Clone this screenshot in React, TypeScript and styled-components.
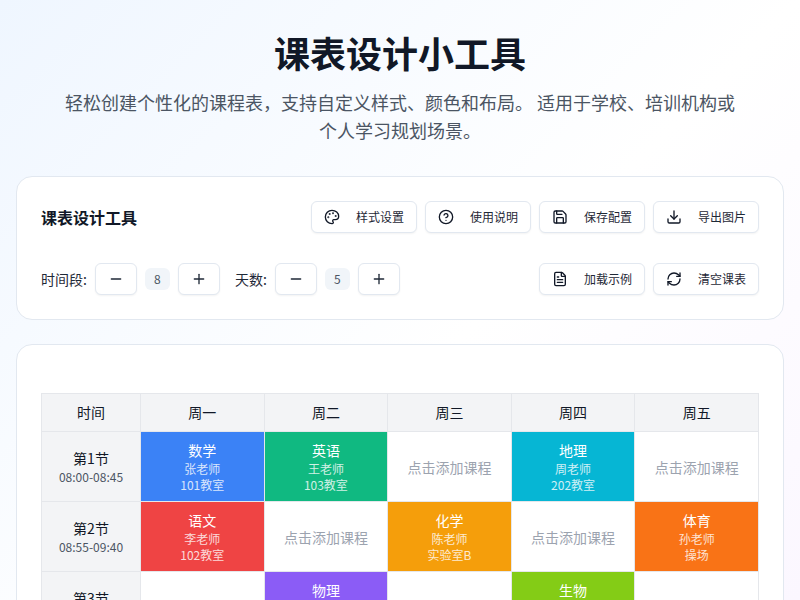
import React from "react";
import styled, { createGlobalStyle } from "styled-components";
import { Palette, CircleHelp, Save, Download, FileText, RefreshCw, Minus, Plus } from "lucide-react";

const Global = createGlobalStyle`
  body {
    margin: 0;
    font-family: "Noto Sans CJK SC", sans-serif;
    color: #111827;
    background: #fff;
    line-height: 1.5;
  }
  * { box-sizing: border-box; }
`;

const Page = styled.div`
  height: 600px;
  overflow: clip;
  padding: 32px 16px 16px;
  background: linear-gradient(135deg, #eff6ff 0%, #ffffff 57%, #fbf7ff 100%);
`;
const Header = styled.header`
  text-align: center;
  margin-bottom: 32px;
`;
const Title = styled.h1`
  margin: 0 0 16px;
  font-size: 36px;
  line-height: 40px;
  font-weight: 700;
  color: #111827;
`;
const Subtitle = styled.p`
  margin: 0 auto;
  max-width: 672px;
  font-size: 18px;
  line-height: 28px;
  color: #4b5563;
`;
const Card = styled.section`
  background: #fff;
  border: 1px solid #e2e8f0;
  border-radius: 16px;
  padding: 24px;
  margin-bottom: 24px;
`;
const ToolbarRow = styled.div`
  display: flex;
  align-items: center;
  justify-content: space-between;
  margin-bottom: 30px;
`;
const ControlRow = styled(ToolbarRow)`
  margin-bottom: 0;
`;
const CardTitle = styled.h2`
  margin: 0;
  font-size: 16px;
  line-height: 32px;
  font-weight: 700;
`;
const Actions = styled.div`
  display: flex;
  gap: 8px;
`;
const ActionButton = styled.button`
  display: flex;
  align-items: center;
  gap: 16px;
  height: 32px;
  padding: 0 12px;
  font-family: inherit;
  font-size: 12px;
  line-height: 16px;
  color: #1f2937;
  background: #fff;
  border: 1px solid #e2e8f0;
  border-radius: 6px;
  box-shadow: 0 1px 2px rgba(0, 0, 0, 0.05);
`;
const Controls = styled.div`
  display: flex;
  align-items: center;
  gap: 15px;
`;
const Stepper = styled.div`
  display: flex;
  align-items: center;
  gap: 8px;
  font-size: 14px;
  line-height: 21px;
  color: #1f2937;
`;
const StepButton = styled.button`
  display: flex;
  align-items: center;
  justify-content: center;
  width: 42px;
  height: 32px;
  padding: 0;
  color: #1f2937;
  background: #fff;
  border: 1px solid #e2e8f0;
  border-radius: 6px;
  box-shadow: 0 1px 2px rgba(0, 0, 0, 0.05);
`;
const Value = styled.span`
  width: 25px;
  height: 22px;
  line-height: 22px;
  text-align: center;
  font-size: 12px;
  color: #4b5563;
  background: #f1f5f9;
  border-radius: 6px;
`;
const TableCard = styled(Card)`
  padding-top: 48px;
`;
const Table = styled.table`
  width: 718px;
  table-layout: fixed;
  border-collapse: collapse;
  font-size: 14px;
  line-height: 21px;
`;
const Th = styled.th<{ $time?: boolean }>`
  width: ${(p) => (p.$time ? "99px" : "auto")};
  height: 38px;
  padding: 0;
  font-weight: 400;
  color: #111827;
  background: #f3f4f6;
  border: 1px solid #e5e7eb;
`;
const TimeCell = styled.td`
  height: 70px;
  padding: 0;
  text-align: center;
  background: #f3f4f6;
  border: 1px solid #e5e7eb;
`;
const TimeName = styled.div`
  font-size: 14px;
  line-height: 21px;
  color: #111827;
`;
const TimeRange = styled.div`
  font-size: 12px;
  line-height: 16px;
  color: #4b5563;
`;
const Cell = styled.td<{ $bg?: string }>`
  height: 70px;
  padding: 0;
  text-align: center;
  vertical-align: middle;
  background: ${(p) => p.$bg || "#fff"};
  border: 1px solid #e5e7eb;
  color: ${(p) => (p.$bg ? "#fff" : "#9ca3af")};
`;
const Placeholder = styled.div`
  padding-top: 2px;
`;
const Subject = styled.div`
  font-size: 14px;
  line-height: 21px;
`;
const Detail = styled.div`
  font-size: 12px;
  line-height: 16px;
  opacity: 0.8;
`;

type Course = { n: string; t: string; r: string; c: string };
const rows: { name: string; time: string; cells: (Course | null)[] }[] = [
  {
    name: "第1节",
    time: "08:00-08:45",
    cells: [
      { n: "数学", t: "张老师", r: "101教室", c: "#3b82f6" },
      { n: "英语", t: "王老师", r: "103教室", c: "#10b981" },
      null,
      { n: "地理", t: "周老师", r: "202教室", c: "#06b6d4" },
      null,
    ],
  },
  {
    name: "第2节",
    time: "08:55-09:40",
    cells: [
      { n: "语文", t: "李老师", r: "102教室", c: "#ef4444" },
      null,
      { n: "化学", t: "陈老师", r: "实验室B", c: "#f59e0b" },
      null,
      { n: "体育", t: "孙老师", r: "操场", c: "#f97316" },
    ],
  },
  {
    name: "第3节",
    time: "09:50-10:35",
    cells: [
      null,
      { n: "物理", t: "赵老师", r: "实验室A", c: "#8b5cf6" },
      null,
      { n: "生物", t: "吴老师", r: "实验室C", c: "#84cc16" },
      null,
    ],
  },
];

const topActions = [
  { I: Palette, l: "样式设置" },
  { I: CircleHelp, l: "使用说明" },
  { I: Save, l: "保存配置" },
  { I: Download, l: "导出图片" },
];
const bottomActions = [
  { I: FileText, l: "加载示例" },
  { I: RefreshCw, l: "清空课表" },
];

const Act = ({ I, l }: { I: typeof Save; l: string }) => (
  <ActionButton>
    <I size={16} color="#111827" />
    {l}
  </ActionButton>
);

const Step = ({ label, v }: { label: string; v: number }) => (
  <Stepper>
    {label}
    <StepButton><Minus size={16} /></StepButton>
    <Value>{v}</Value>
    <StepButton><Plus size={16} /></StepButton>
  </Stepper>
);

export default function App() {
  return (
    <Page>
      <Global />
      <Header>
        <Title>课表设计小工具</Title>
        <Subtitle>轻松创建个性化的课程表，支持自定义样式、颜色和布局。 适用于学校、培训机构或个人学习规划场景。</Subtitle>
      </Header>
      <Card>
        <ToolbarRow>
          <CardTitle>课表设计工具</CardTitle>
          <Actions>{topActions.map((a) => <Act key={a.l} {...a} />)}</Actions>
        </ToolbarRow>
        <ControlRow>
          <Controls>
            <Step label="时间段:" v={8} />
            <Step label="天数:" v={5} />
          </Controls>
          <Actions>{bottomActions.map((a) => <Act key={a.l} {...a} />)}</Actions>
        </ControlRow>
      </Card>
      <TableCard>
        <Table>
          <thead>
            <tr>
              <Th $time>时间</Th>
              {["周一", "周二", "周三", "周四", "周五"].map((d) => <Th key={d}>{d}</Th>)}
            </tr>
          </thead>
          <tbody>
            {rows.map((r) => (
              <tr key={r.name}>
                <TimeCell>
                  <TimeName>{r.name}</TimeName>
                  <TimeRange>{r.time}</TimeRange>
                </TimeCell>
                {r.cells.map((c, i) =>
                  c ? (
                    <Cell key={i} $bg={c.c}>
                      <Subject>{c.n}</Subject>
                      <Detail>{c.t}</Detail>
                      <Detail>{c.r}</Detail>
                    </Cell>
                  ) : (
                    <Cell key={i}><Placeholder>点击添加课程</Placeholder></Cell>
                  )
                )}
              </tr>
            ))}
          </tbody>
        </Table>
      </TableCard>
    </Page>
  );
}
